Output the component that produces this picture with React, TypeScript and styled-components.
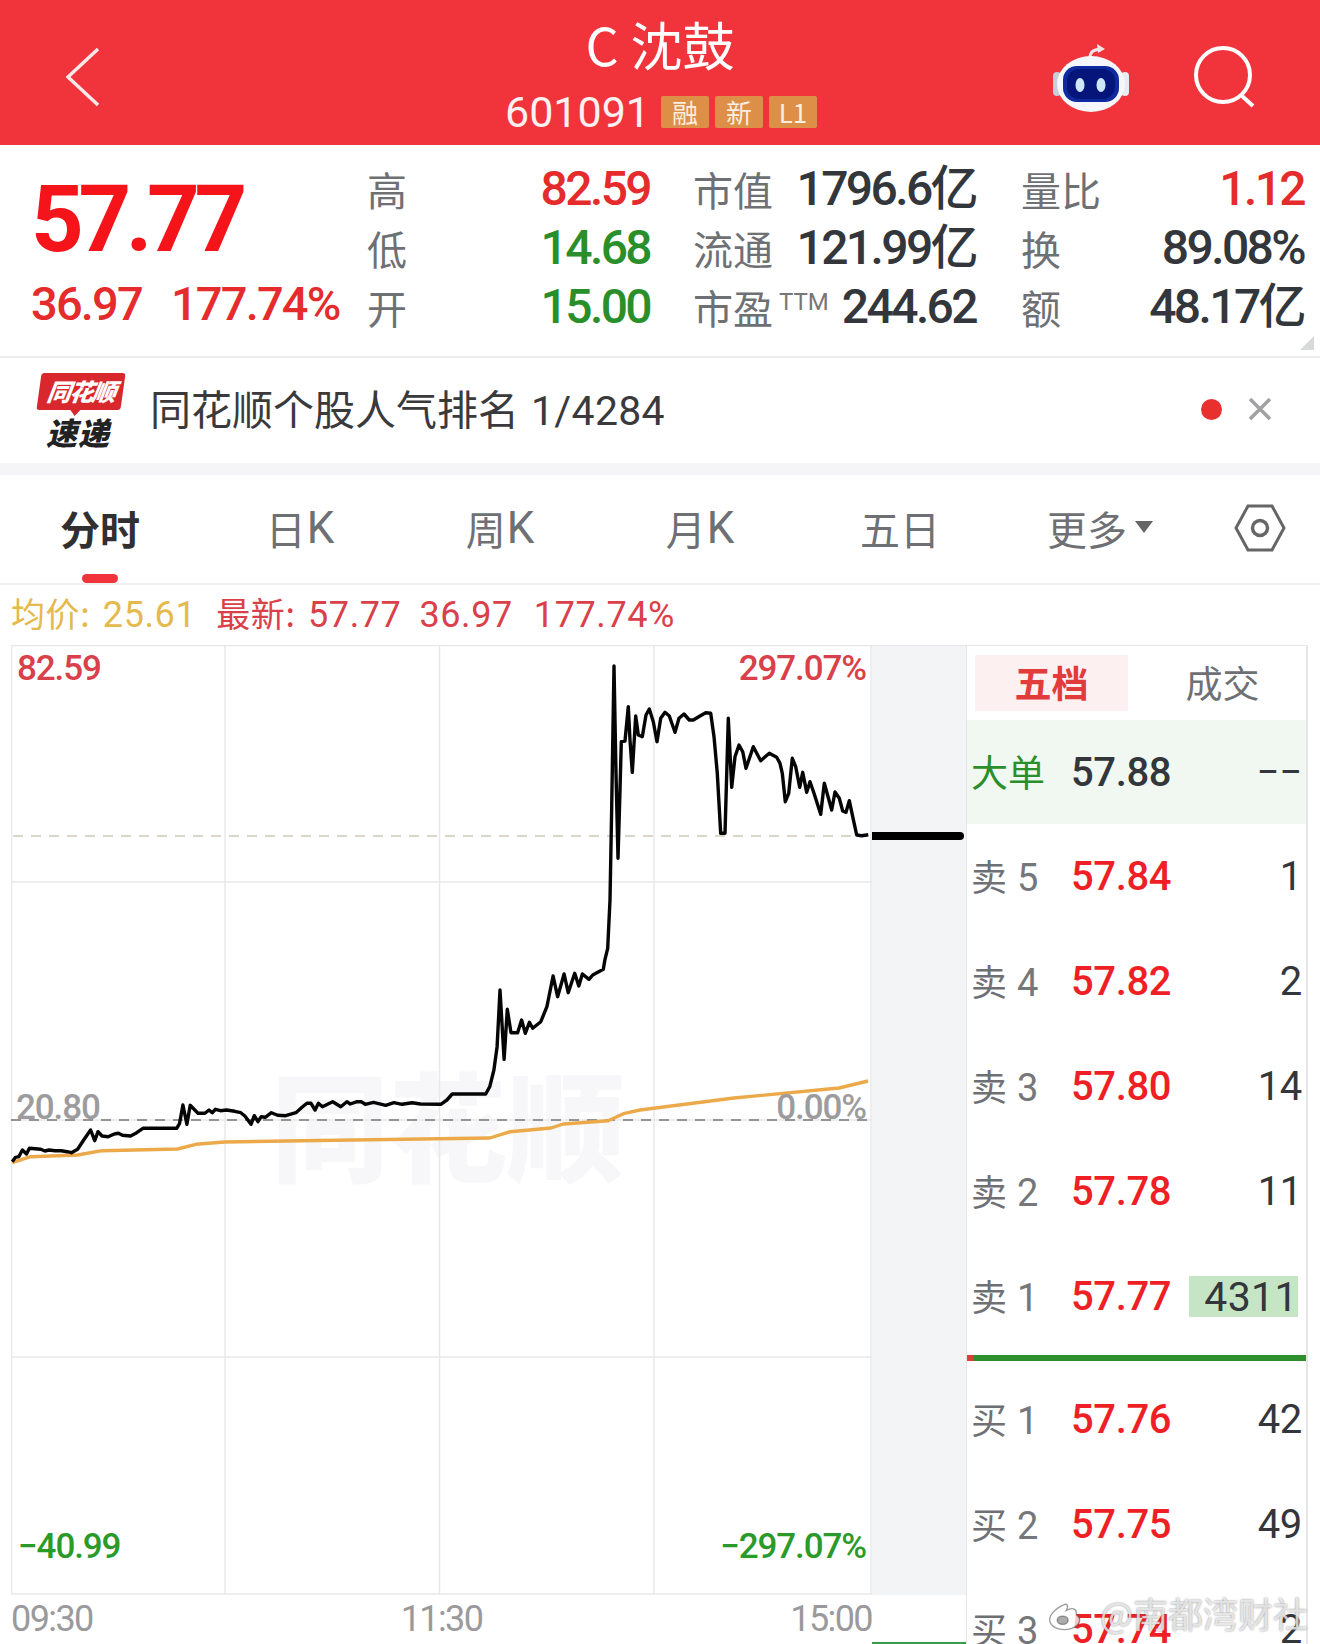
import styled, { createGlobalStyle } from 'styled-components'

const RED = '#e52b2b'
const GREEN = '#2a8f2a'
const DARK = '#33363b'
const GRAY = '#6e7074'
const NUM = `Roboto, "Noto Sans CJK SC", sans-serif`
const CJK = `"Noto Sans CJK SC", Roboto, sans-serif`

const GlobalStyle = createGlobalStyle`
  html, body {
    margin: 0;
    padding: 0;
    background: #fff;
  }
  body {
    width: 1320px;
    height: 1644px;
    overflow: hidden;
    font-family: ${NUM};
  }
`

const Page = styled.div`
  width: 1320px;
  height: 1644px;
  overflow: hidden;
  display: flex;
  flex-direction: column;
  position: relative;
`

/* header */
const Header = styled.header`
  height: 145px;
  flex: none;
  background: #f1343c;
  color: #fff;
  display: grid;
  grid-template-columns: 400px 520px 400px;
`

const HeaderLeft = styled.div`
  padding: 48px 0 0 66px;
`

const HeaderCenter = styled.div`
  display: flex;
  flex-direction: column;
  align-items: center;
  padding-top: 16px;
`

const Title = styled.div`
  font-family: ${CJK};
  font-size: 52px;
  line-height: 56px;
  height: 56px;
`

const CodeRow = styled.div`
  display: flex;
  align-items: center;
  gap: 6px;
  margin-top: 23px;
  margin-left: 2px;
`

const Code = styled.span`
  font-size: 43px;
  line-height: 34px;
  margin-right: 5px;
  color: #fdf0f0;
`

const Tag = styled.span`
  width: 48px;
  height: 32px;
  background: #de8f47;
  color: #fbeee0;
  border-radius: 2px;
  font-family: ${CJK};
  font-size: 26px;
  line-height: 32px;
  text-align: center;
`

const HeaderRight = styled.div`
  display: flex;
  gap: 64px;
  padding: 44px 0 0 133px;

  svg {
    flex: none;
  }
`

/* quote panel */
const Quote = styled.section`
  height: 213px;
  flex: none;
  box-sizing: border-box;
  display: flex;
  border-bottom: 2px solid #eceded;
  position: relative;
`

const PriceBlock = styled.div`
  width: 291px;
  padding-left: 31px;
  display: flex;
  flex-direction: column;
`

const BigPrice = styled.div`
  font-weight: 700;
  font-size: 92px;
  line-height: 70px;
  letter-spacing: -5.4px;
  color: #f5141a;
  margin-top: 40px;
`

const PriceChange = styled.div`
  display: flex;
  gap: 29px;
  font-weight: 500;
  font-size: 47px;
  line-height: 40px;
  letter-spacing: -1.8px;
  color: ${RED};
  margin-top: 29px;
  white-space: nowrap;
`

const QuoteColumn = styled.div<{ $width: number; $offset: number }>`
  width: ${p => p.$width}px;
  margin-left: ${p => p.$offset}px;
  padding-top: 14px;
  display: grid;
  grid-auto-rows: 59px;
`

const QuoteRow = styled.div`
  display: flex;
  align-items: center;
  justify-content: space-between;
`

const QuoteLabel = styled.span`
  font-family: ${CJK};
  font-size: 40px;
  line-height: 44px;
  color: ${GRAY};
  white-space: nowrap;
`

const Ttm = styled.sup`
  font-family: ${NUM};
  font-size: 24px;
  line-height: 1;
  vertical-align: 14px;
  margin-left: 6px;
  color: #777;
`

const QuoteValue = styled.span<{ $color: string }>`
  font-weight: 500;
  font-size: 48px;
  line-height: 50px;
  letter-spacing: -2.6px;
  color: ${p => p.$color};
  white-space: nowrap;
`

const Corner = styled.div`
  position: absolute;
  right: 6px;
  bottom: 6px;
  width: 0;
  height: 0;
  border-style: solid;
  border-width: 0 0 14px 14px;
  border-color: transparent transparent #d8d9db transparent;
`

/* news banner */
const Banner = styled.section`
  height: 105px;
  flex: none;
  display: flex;
  align-items: center;
  padding: 0 0 3px 37px;
  box-sizing: border-box;
  position: relative;
`

const LogoBox = styled.div`
  width: 88px;
  height: 75px;
  position: relative;
  margin-right: 25px;
  flex: none;
  align-self: flex-start;
  margin-top: 15px;
`

const LogoFlag = styled.div`
  width: 84px;
  height: 37px;
  margin-left: 2px;
  background: #d8282e;
  border-radius: 3px;
  transform: skewX(-8deg);
  color: #fff;
  font-family: ${CJK};
  font-weight: 900;
  font-style: italic;
  font-size: 24px;
  line-height: 36px;
  text-align: center;
  letter-spacing: -1.5px;
  position: relative;

  &::after {
    content: '';
    position: absolute;
    left: 34px;
    bottom: -6px;
    border-style: solid;
    border-width: 6px 5px 0 5px;
    border-color: #d8282e transparent transparent transparent;
  }
`

const LogoWord = styled.div`
  font-family: ${CJK};
  font-weight: 900;
  font-style: italic;
  font-size: 31px;
  line-height: 32px;
  color: #222;
  margin: 6px 0 0 9px;
  letter-spacing: 1px;
`

const BannerText = styled.div`
  font-family: ${CJK};
  font-size: 41px;
  line-height: 50px;
  color: #3a3a3c;
  white-space: nowrap;
`

const BannerNum = styled.span`
  font-family: ${NUM};
  font-size: 41px;
  margin-left: 12px;
  letter-spacing: 0.3px;
`

const BannerActions = styled.div`
  margin-left: auto;
  margin-right: 48px;
  display: flex;
  align-items: center;
  gap: 26px;
`

const Dot = styled.span`
  width: 21px;
  height: 21px;
  border-radius: 50%;
  background: #e8302f;
`

const SectionGap = styled.div`
  height: 12px;
  flex: none;
  background: #f5f5f7;
`

/* period tabs */
const Tabs = styled.nav`
  height: 110px;
  flex: none;
  box-sizing: border-box;
  border-bottom: 2px solid #eeeeee;
  display: grid;
  grid-template-columns: repeat(6, 200px) 120px;
`

const Tab = styled.div<{ $active?: boolean }>`
  position: relative;
  display: flex;
  align-items: center;
  justify-content: center;
  padding-bottom: 2px;
  font-family: ${CJK};
  font-size: 40px;
  font-weight: ${p => (p.$active ? 700 : 400)};
  color: ${p => (p.$active ? '#303030' : GRAY)};
`

const TabK = styled.span`
  font-family: ${NUM};
  font-size: 44px;
  margin-left: 1px;
`

const TabMark = styled.span`
  position: absolute;
  left: 82px;
  bottom: 0;
  width: 36px;
  height: 9px;
  border-radius: 5px;
  background: #f1343c;
`

const Caret = styled.span`
  border-style: solid;
  border-width: 12px 9px 0 9px;
  border-color: #666 transparent transparent transparent;
  margin: 0 0 2px 8px;
`

/* average / latest line */
const InfoLine = styled.div`
  height: 60px;
  flex: none;
  display: flex;
  align-items: baseline;
  padding-left: 11px;
  font-size: 36px;
  line-height: 60px;
  letter-spacing: 0.6px;
  white-space: nowrap;
`

const InfoItem = styled.span<{ $color: string; $gap?: number }>`
  color: ${p => p.$color};
  margin-left: ${p => p.$gap ?? 0}px;
`

const InfoCjk = styled.span`
  font-family: ${CJK};
  font-size: 34px;
  line-height: 34px;
  margin-right: 3px;
`

/* chart + order book */
const Body = styled.main`
  flex: 1;
  display: flex;
  min-height: 0;
  overflow: hidden;
`

const ChartColumn = styled.div`
  width: 966px;
  flex: none;
  padding-left: 11px;
  box-sizing: border-box;
  position: relative;
`

const ChartRow = styled.div`
  display: flex;
  height: 950px;
`

const Plot = styled.div`
  width: 861px;
  flex: none;
  position: relative;
`

const PlotSvg = styled.svg`
  display: block;
  position: relative;
  width: 861px;
  height: 950px;
`

const Strip = styled.div`
  width: 94px;
  flex: none;
  position: relative;
  background: #f3f4f6;
  border-top: 1px solid #e6e6e8;
  box-sizing: border-box;
`

const PriceBar = styled.div`
  position: absolute;
  left: 0;
  top: 186px;
  width: 92px;
  height: 8px;
  border-radius: 0 4px 4px 0;
  background: #000;
`

const AxisLabel = styled.span<{ $color: string; $top: number; $left?: number; $right?: number }>`
  position: absolute;
  top: ${p => p.$top}px;
  ${p => (p.$left !== undefined ? `left: ${p.$left}px;` : '')}
  ${p => (p.$right !== undefined ? `right: ${p.$right}px;` : '')}
  color: ${p => p.$color};
  font-size: 35px;
  font-weight: 500;
  line-height: 40px;
  letter-spacing: -1.1px;
`

const Watermark = styled.div`
  position: absolute;
  left: 260px;
  top: 412px;
  font-family: ${CJK};
  font-weight: 900;
  font-size: 118px;
  line-height: 130px;
  color: #f7f7f9;
`

const TimeAxis = styled.div`
  width: 861px;
  height: 48px;
  display: grid;
  grid-template-columns: 1fr 1fr 1fr;
  align-items: center;
  font-size: 36px;
  letter-spacing: -1.6px;
  color: #9a9a9c;
`

const TimeTick = styled.span<{ $align: string }>`
  text-align: ${p => p.$align};
`

const BottomEdge = styled.div`
  position: absolute;
  right: 0;
  top: 997px;
  width: 94px;
  height: 2px;
  background: #3a9a4a;
`

const Book = styled.aside`
  width: 342px;
  flex: none;
  box-sizing: border-box;
  border-left: 1px solid #e6e6e8;
  border-right: 2px solid #e6e6e8;
  border-top: 1px solid #e6e6e8;
`

const BookTabs = styled.div`
  height: 74px;
  box-sizing: border-box;
  display: flex;
  align-items: flex-start;
  padding: 9px 0 0 8px;
`

const BookTab = styled.div<{ $active?: boolean }>`
  width: 153px;
  height: 56px;
  line-height: 54px;
  text-align: center;
  font-family: ${CJK};
  font-size: 37px;
  font-weight: ${p => (p.$active ? 700 : 400)};
  color: ${p => (p.$active ? '#e23b3b' : GRAY)};
  background: ${p => (p.$active ? '#fdf0f0' : 'transparent')};
  margin-right: ${p => (p.$active ? '18px' : 0)};
`

const BookRow = styled.div<{ $big?: boolean }>`
  height: ${p => (p.$big ? 104 : 105)}px;
  display: grid;
  grid-template-columns: 100px 112px 1fr;
  align-items: center;
  padding: 0 4px;
  background: ${p => (p.$big ? '#f0f8f1' : 'transparent')};
`

const RowLabel = styled.span<{ $big?: boolean }>`
  font-family: ${CJK};
  font-size: ${p => (p.$big ? 37 : 36)}px;
  color: ${p => (p.$big ? GREEN : GRAY)};
  white-space: nowrap;
  margin-top: -3px;
`

const RowDigit = styled.span`
  font-family: ${NUM};
  font-size: 38px;
  margin-left: 10px;
  color: #75777a;
`

const RowPrice = styled.span<{ $big?: boolean }>`
  font-weight: 500;
  font-size: 40px;
  letter-spacing: -0.4px;
  color: ${p => (p.$big ? DARK : '#ee1f25')};
`

const RowVolume = styled.span`
  justify-self: end;
  font-size: 40px;
  letter-spacing: -0.3px;
  color: ${DARK};
`

const VolumeBar = styled.span`
  justify-self: end;
  width: 109px;
  height: 41px;
  margin-right: 4px;
  box-sizing: border-box;
  background: #c5e5c5;
  font-size: 41px;
  line-height: 42px;
  letter-spacing: 0.4px;
  text-align: right;
  color: ${DARK};
`

const BookDivider = styled.div`
  height: 6px;
  margin: 6px 0;
  background: linear-gradient(to right, #d8403a 7px, #2e8f2e 7px);
`

const Weibo = styled.div`
  position: absolute;
  right: 12px;
  bottom: 8px;
  display: flex;
  align-items: center;
  gap: 8px;
  font-family: ${CJK};
  font-size: 35px;
  line-height: 46px;
  color: rgba(255, 255, 255, 0.72);
  text-shadow: 0 0 2px rgba(90, 90, 90, 0.75);
  white-space: nowrap;
`

// traced from the crops: a = crop at (0,960) x2.45/y3, b = crop at (560,640) x3/y3
const lineA = [
  [30, 605], [38, 592], [46, 590], [55, 570], [65, 582], [72, 565], [100, 568], [110, 573], [120, 570],
  [135, 572], [150, 572], [165, 575], [175, 578], [190, 568], [205, 540], [222, 510], [232, 542], [240, 515],
  [250, 528], [265, 530], [280, 522], [290, 520], [300, 526], [320, 528], [335, 518], [350, 505], [433, 505],
  [440, 490], [448, 435], [458, 493], [466, 436], [485, 460], [502, 460], [512, 450], [520, 458], [528, 448],
  [540, 452], [555, 450], [575, 454], [590, 458], [600, 468], [615, 493], [623, 467], [632, 485], [640, 470],
  [650, 472], [665, 458], [680, 466], [700, 467], [725, 458], [740, 442], [752, 430], [762, 430], [772, 450],
  [780, 430], [790, 440], [815, 425], [835, 440], [850, 425], [858, 432], [875, 425], [885, 425], [895, 433],
  [915, 427], [945, 436], [965, 428], [985, 433], [1010, 428], [1030, 432], [1080, 433], [1095, 420],
  [1108, 402], [1190, 402], [1200, 380], [1210, 330], [1218, 260], [1225, 90], [1235, 298], [1243, 148],
  [1252, 218], [1268, 218], [1278, 180], [1287, 220], [1297, 187], [1305, 205], [1325, 185], [1340, 140],
  [1355, 48], [1366, 110], [1382, 42], [1392, 98], [1408, 40], [1418, 78], [1427, 42], [1443, 58], [1452, 45],
  [1478, 28],
]

const lineB = [
  [135, 958], [143, 925], [150, 780], [155, 500], [162, 78], [168, 400], [174, 655], [180, 450], [184, 305],
  [195, 303], [205, 200], [210, 300], [217, 397], [227, 228], [235, 285], [247, 290], [258, 225], [268, 207],
  [280, 245], [291, 305], [302, 235], [315, 217], [328, 228], [345, 277], [357, 235], [372, 222], [388, 240],
  [400, 240], [420, 228], [437, 218], [452, 220], [462, 290], [472, 400], [482, 580], [495, 580], [505, 235],
  [515, 442], [525, 350], [537, 315], [548, 335], [558, 385], [580, 320], [602, 362], [628, 340], [650, 352],
  [660, 370], [667, 400], [676, 485], [686, 460], [697, 355], [707, 380], [719, 442], [728, 397], [740, 457],
  [750, 425], [762, 460], [782, 523], [793, 430], [815, 510], [825, 456], [838, 475], [848, 513], [858, 517],
  [868, 482], [878, 530], [890, 585], [905, 587], [925, 584],
]

const avgA = [
  [30, 608], [75, 590], [190, 585], [250, 572], [435, 567], [480, 553], [550, 546], [740, 542], [1200, 534],
  [1250, 515], [1350, 504], [1380, 492], [1490, 482], [1530, 460], [1568, 450],
]

const fromA = (pts: number[][]) => pts.map(([x, y]) => `${(x / 2.45).toFixed(1)},${(960 + y / 3).toFixed(1)}`)
const fromB = (pts: number[][]) => pts.map(([x, y]) => `${(560 + x / 3).toFixed(1)},${(640 + y / 3).toFixed(1)}`)

const pricePoints = [...fromA(lineA), ...fromB(lineB)].join(' ')
const avgPoints = [...fromA(avgA), '734,1098', '839,1088', '868,1081'].join(' ')

const quoteColumns = [
  {
    width: 283,
    offset: 45,
    rows: [
      { label: '高', value: '82.59', color: RED },
      { label: '低', value: '14.68', color: GREEN },
      { label: '开', value: '15.00', color: GREEN },
    ],
  },
  {
    width: 283,
    offset: 43,
    rows: [
      { label: '市值', value: '1796.6亿', color: DARK },
      { label: '流通', value: '121.99亿', color: DARK },
      { label: '市盈', ttm: true, value: '244.62', color: DARK },
    ],
  },
  {
    width: 283,
    offset: 45,
    rows: [
      { label: '量比', value: '1.12', color: RED },
      { label: '换', value: '89.08%', color: DARK },
      { label: '额', value: '48.17亿', color: DARK },
    ],
  },
]

const sellRows = [
  { side: '卖', n: 5, price: '57.84', volume: '1' },
  { side: '卖', n: 4, price: '57.82', volume: '2' },
  { side: '卖', n: 3, price: '57.80', volume: '14' },
  { side: '卖', n: 2, price: '57.78', volume: '11' },
  { side: '卖', n: 1, price: '57.77', volume: '4311', bar: true },
]

const buyRows = [
  { side: '买', n: 1, price: '57.76', volume: '42' },
  { side: '买', n: 2, price: '57.75', volume: '49' },
  { side: '买', n: 3, price: '57.74', volume: '2' },
]

function BackIcon() {
  return (
    <svg width="36" height="60" viewBox="0 0 36 60" fill="none" stroke="#fbe9ea" strokeWidth="3.4">
      <path d="M32 1 L2 29 L32 57" />
    </svg>
  )
}

function RobotIcon() {
  return (
    <svg width="76" height="70" viewBox="0 0 76 70">
      <path d="M37 14 C37 7 41 6 47 5" fill="none" stroke="#f0e4e6" strokeWidth="3" />
      <path d="M44 0 L52 5 L45 9 Z" fill="#f0e4e6" />
      <rect x="0" y="28" width="8" height="24" rx="4" fill="#c9ced8" />
      <rect x="68" y="28" width="8" height="24" rx="4" fill="#e8ebf2" />
      <ellipse cx="38" cy="40" rx="34" ry="28" fill="#f6f7fb" />
      <rect x="10" y="22" width="56" height="36" rx="14" fill="#0e2a9e" />
      <rect x="14" y="25" width="48" height="30" rx="12" fill="#06157a" />
      <ellipse cx="27" cy="41" rx="4.5" ry="7" fill="#cfe8f5" />
      <ellipse cx="48" cy="41" rx="4.5" ry="7" fill="#cfe8f5" />
    </svg>
  )
}

function SearchIcon() {
  return (
    <svg width="64" height="66" viewBox="0 0 64 66" fill="none" stroke="#fff">
      <circle cx="30" cy="31" r="27" strokeWidth="4" />
      <path d="M49 52 L60 62" strokeWidth="4" />
    </svg>
  )
}

function CloseIcon() {
  return (
    <svg width="24" height="24" viewBox="0 0 24 24" fill="none" stroke="#a2a2a4" strokeWidth="3.6">
      <path d="M2 2 L22 22 M22 2 L2 22" />
    </svg>
  )
}

function HexIcon() {
  return (
    <svg width="52" height="48" viewBox="0 0 52 48" fill="none" stroke="#666" strokeWidth="3">
      <path d="M14 2 H38 L50 24 L38 46 H14 L2 24 Z" />
      <circle cx="26" cy="24" r="7.5" strokeWidth="3.4" />
    </svg>
  )
}

function WeiboIcon() {
  return (
    <svg width="46" height="38" viewBox="0 0 48 42" fill="rgba(255,255,255,0.75)" stroke="rgba(90,90,90,0.6)" strokeWidth="1.5">
      <path d="M18 12 C7 17 1 25 3 31 C6 39 18 41 27 38 C35 35 38 29 34 25 C32 23 31 23 32 20 C32 16 27 15 21 18 C24 13 22 10 18 12 Z" />
      <ellipse cx="17" cy="29" rx="6" ry="4.6" fill="rgba(90,90,90,0.5)" />
      <path d="M30 8 C37 7 42 13 40 20 M31 1 C42 0 50 10 46 22" fill="none" strokeWidth="3" stroke="rgba(255,255,255,0.85)" />
    </svg>
  )
}

function PriceChart() {
  const verticals = [11.5, 225, 439.5, 654, 871]
  const horizontals = [645.5, 882, 1120, 1357, 1594]
  return (
    <PlotSvg viewBox="11 645 861 950">
      {horizontals.map(y => (
        <line key={y} x1="11" x2="872" y1={y} y2={y} stroke="#e8e8ea" strokeWidth="1.5" />
      ))}
      {verticals.map(x => (
        <line key={x} x1={x} x2={x} y1="645" y2="1595" stroke="#e8e8ea" strokeWidth="1.5" />
      ))}
      <line x1="11" x2="868" y1="1120" y2="1120" stroke="#77777a" strokeWidth="1.5" strokeDasharray="10 8" />
      <line x1="13" x2="868" y1="836" y2="836" stroke="#cfc9b8" strokeWidth="1.5" strokeDasharray="10 8" />
      <polyline points={avgPoints} fill="none" stroke="#eba94a" strokeWidth="3.4" strokeLinejoin="round" />
      <polyline points={pricePoints} fill="none" stroke="#050505" strokeWidth="3.4" strokeLinejoin="round" />
    </PlotSvg>
  )
}

type Level = { side: string; n: number; price: string; volume: string; bar?: boolean }

function LevelRow({ side, n, price, volume, bar }: Level) {
  return (
    <BookRow>
      <RowLabel>
        {side}
        <RowDigit>{n}</RowDigit>
      </RowLabel>
      <RowPrice>{price}</RowPrice>
      {bar ? <VolumeBar>{volume}</VolumeBar> : <RowVolume>{volume}</RowVolume>}
    </BookRow>
  )
}

export default function App() {
  return (
    <Page>
      <GlobalStyle />
      <Header>
        <HeaderLeft>
          <BackIcon />
        </HeaderLeft>
        <HeaderCenter>
          <Title>C 沈鼓</Title>
          <CodeRow>
            <Code>601091</Code>
            <Tag>融</Tag>
            <Tag>新</Tag>
            <Tag>L1</Tag>
          </CodeRow>
        </HeaderCenter>
        <HeaderRight>
          <RobotIcon />
          <SearchIcon />
        </HeaderRight>
      </Header>

      <Quote>
        <PriceBlock>
          <BigPrice>57.77</BigPrice>
          <PriceChange>
            <span>36.97</span>
            <span>177.74%</span>
          </PriceChange>
        </PriceBlock>
        {quoteColumns.map(col => (
          <QuoteColumn key={col.rows[0].label} $width={col.width} $offset={col.offset}>
            {col.rows.map(row => (
              <QuoteRow key={row.label}>
                <QuoteLabel>
                  {row.label}
                  {row.ttm && <Ttm>TTM</Ttm>}
                </QuoteLabel>
                <QuoteValue $color={row.color}>{row.value}</QuoteValue>
              </QuoteRow>
            ))}
          </QuoteColumn>
        ))}
        <Corner />
      </Quote>

      <Banner>
        <LogoBox>
          <LogoFlag>同花顺</LogoFlag>
          <LogoWord>速递</LogoWord>
        </LogoBox>
        <BannerText>
          同花顺个股人气排名<BannerNum>1/4284</BannerNum>
        </BannerText>
        <BannerActions>
          <Dot />
          <CloseIcon />
        </BannerActions>
      </Banner>

      <SectionGap />

      <Tabs>
        <Tab $active>
          分时
          <TabMark />
        </Tab>
        <Tab>
          日<TabK>K</TabK>
        </Tab>
        <Tab>
          周<TabK>K</TabK>
        </Tab>
        <Tab>
          月<TabK>K</TabK>
        </Tab>
        <Tab>五日</Tab>
        <Tab>
          更多
          <Caret />
        </Tab>
        <Tab>
          <HexIcon />
        </Tab>
      </Tabs>

      <InfoLine>
        <InfoItem $color="#e4b94e">
          <InfoCjk>均价:</InfoCjk> 25.61
        </InfoItem>
        <InfoItem $color="#d9404a" $gap={20}>
          <InfoCjk>最新:</InfoCjk> 57.77
        </InfoItem>
        <InfoItem $color="#d9404a" $gap={18}>
          36.97
        </InfoItem>
        <InfoItem $color="#d9404a" $gap={21}>
          177.74%
        </InfoItem>
      </InfoLine>

      <Body>
        <ChartColumn>
          <ChartRow>
            <Plot>
              <Watermark>同花顺</Watermark>
              <PriceChart />
              <AxisLabel $color="#d9404a" $top={4} $left={6}>82.59</AxisLabel>
              <AxisLabel $color="#d9404a" $top={4} $right={6}>297.07%</AxisLabel>
              <AxisLabel $color="#9c9c9e" $top={443} $left={5}>20.80</AxisLabel>
              <AxisLabel $color="#9c9c9e" $top={443} $right={6}>0.00%</AxisLabel>
              <AxisLabel $color="#2a9a2a" $top={882} $left={7}>−40.99</AxisLabel>
              <AxisLabel $color="#2a9a2a" $top={882} $right={6}>−297.07%</AxisLabel>
            </Plot>
            <Strip>
              <PriceBar />
            </Strip>
          </ChartRow>
          <TimeAxis>
            <TimeTick $align="left">09:30</TimeTick>
            <TimeTick $align="center">11:30</TimeTick>
            <TimeTick $align="right">15:00</TimeTick>
          </TimeAxis>
          <BottomEdge />
        </ChartColumn>

        <Book>
          <BookTabs>
            <BookTab $active>五档</BookTab>
            <BookTab>成交</BookTab>
          </BookTabs>
          <BookRow $big>
            <RowLabel $big>大单</RowLabel>
            <RowPrice $big>57.88</RowPrice>
            <RowVolume>−−</RowVolume>
          </BookRow>
          {sellRows.map(r => (
            <LevelRow key={r.side + r.n} {...r} />
          ))}
          <BookDivider />
          {buyRows.map(r => (
            <LevelRow key={r.side + r.n} {...r} />
          ))}
        </Book>
      </Body>

      <Weibo>
        <WeiboIcon />
        @南都湾财社
      </Weibo>
    </Page>
  )
}
